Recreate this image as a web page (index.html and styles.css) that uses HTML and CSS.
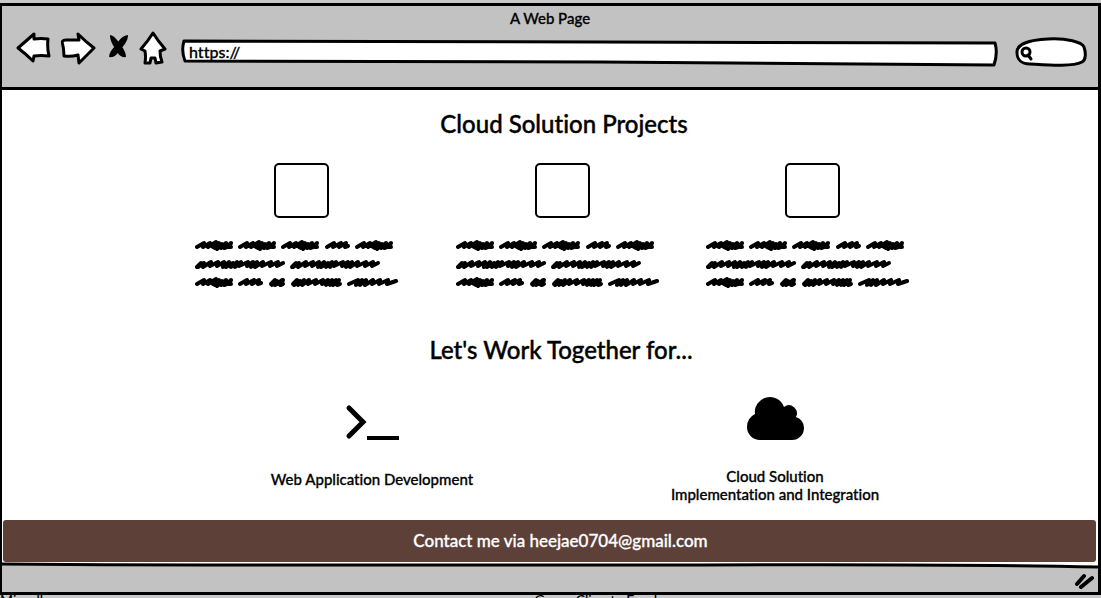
FILE: index.html
```html
<!DOCTYPE html>
<html lang="en">
<head>
<meta charset="utf-8">
<title>A Web Page</title>
<link rel="stylesheet" href="styles.css">
</head>
<body>
<svg class="defs" aria-hidden="true">
  <symbol id="w38" viewBox="0 0 38 12" overflow="visible"><path d="M2 8L9 4L8 8L15 4L13 8L21 3L18 8L20 9L24 4L22 10L27 5L26 9L31 4L29 9L32 8L36 4L34 8L36 8"/></symbol>
  <symbol id="w25" viewBox="0 0 25 12" overflow="visible"><path d="M2 8L9 4L8 8L16 4L14 8L21 4L20 8L23 7"/></symbol>
  <symbol id="w16" viewBox="0 0 16 12" overflow="visible"><path d="M2 8L6 4L3 9L8 5L6 9L8 8L13 4L11 9L14 4L12 9L14 8"/></symbol>
  <symbol id="w51" viewBox="0 0 51 12" overflow="visible"><path d="M2 8L6 4L3 9L9 5L7 9L13 4L11 9L18 4L17 8L25 4L24 8L32 4L31 8L37 4L35 9L41 4L39 9L45 4L42 9L48 4L46 9L49 8"/></symbol>
  <symbol id="w50" viewBox="0 0 51 12" overflow="visible"><path d="M2 8L11 4L9 9L15 4L13 9L19 4L18 9L26 4L25 8L33 4L32 8L41 4L40 8L49 5"/></symbol>
  <symbol id="w90" viewBox="0 0 90 12" overflow="visible"><path d="M2 9L6 5L3 9L9 5L8 9L16 4L15 8L23 4L22 8L29 4L28 9L34 4L31 9L38 5L36 9L42 4L40 9L46 4L44 8L53 4L52 8L58 4L56 9L62 4L60 9L68 4L67 8L76 4L75 8L83 4L82 8L88 5"/></symbol>
  <symbol id="copy" viewBox="0 0 203 50">
    <use href="#w38" x="0" y="0" width="38" height="12"/><use href="#w38" x="43" y="0" width="38" height="12"/><use href="#w38" x="86" y="0" width="38" height="12"/><use href="#w25" x="130" y="0" width="25" height="12"/><use href="#w38" x="160" y="0" width="38" height="12"/>
    <use href="#w90" x="0" y="19" width="90" height="12"/><use href="#w90" x="95" y="19" width="90" height="12"/>
    <use href="#w38" x="0" y="37" width="38" height="12"/><use href="#w25" x="43" y="37" width="25" height="12"/><use href="#w16" x="74" y="37" width="16" height="12"/><use href="#w51" x="96" y="37" width="51" height="12"/><use href="#w50" x="152" y="37" width="51" height="12"/>
  </symbol>
</svg>
<div class="page">
  <div class="window">
    <header class="chrome">
      <div class="window-title">A Web Page</div>
      <div class="toolbar">
        <button class="tool" type="button" aria-label="Back"><svg width="35" height="36" viewBox="16 28 35 36"><path class="sketch" d="M18 46L34 32L34 37Q41 36 48 37Q47 46 49 54Q41 53 34 54L33 59Q26 52 18 46Z"/></svg></button>
        <button class="tool" type="button" aria-label="Forward"><svg width="35" height="36" viewBox="61 28 35 36"><path class="sketch" d="M62 40Q63 38 66 38L79 38L78 32Q86 40 94 46L79 61L78 53Q71 55 64 54Q64 46 62 40Z"/></svg></button>
        <button class="tool" type="button" aria-label="Stop"><svg width="23" height="36" viewBox="107 28 23 36"><path d="M111 33C116 34 118 38 121 42C124 46 127 50 127 55C122 56 119 52 117 48C114 43 111 39 111 33Z"/><path d="M129 33C129 39 125 43 122 47C118 52 116 56 110 55C110 51 113 47 117 43C120 38 123 34 129 33Z"/></svg></button>
        <button class="tool" type="button" aria-label="Home"><svg width="32" height="36" viewBox="139 28 32 36"><path class="sketch" d="M153 31Q158 39 165 47L160 49Q160 55 162 60L156 61L155 56L151 56L150 61L145 61Q146 55 145 49L141 47Q148 39 153 31Z"/></svg></button>
        <div class="address">
          <svg class="outline" viewBox="0 0 817 28" preserveAspectRatio="none" aria-hidden="true"><path class="sketch" d="M3 2Q200 2 420 3Q620 4 815 4Q818 14 814 26Q600 24 420 23L4 22Q0 12 3 2Z"/></svg>
          <input class="address-input" type="text" value="https://" aria-label="Address">
        </div>
        <div class="search">
          <svg class="outline" viewBox="0 0 74 32" preserveAspectRatio="none" aria-hidden="true"><path class="sketch" d="M4 16C3 7 16 3 35 2C54 1 69 5 71 10C73 16 73 23 69 25C59 30 35 28 17 27C8 27 4 22 4 16Z"/><circle class="lens" cx="13" cy="15" r="4"/><path class="lens" d="M15 18L18 22"/></svg>
          <input class="search-input" type="search" aria-label="Search">
        </div>
      </div>
    </header>

    <main class="content">
      <section>
        <h1 class="heading">Cloud Solution Projects</h1>
        <div class="projects">
          <article class="project"><div class="thumb"></div><svg class="copy" width="203" height="50" role="img" aria-label="Project description"><use href="#copy"/></svg></article>
          <article class="project"><div class="thumb"></div><svg class="copy" width="203" height="50" role="img" aria-label="Project description"><use href="#copy"/></svg></article>
          <article class="project"><div class="thumb"></div><svg class="copy" width="203" height="50" role="img" aria-label="Project description"><use href="#copy"/></svg></article>
        </div>
      </section>
      <section>
        <h2 class="heading heading-work">Let's Work Together for...</h2>
        <div class="services">
          <div class="service">
            <svg class="service-icon" width="60" height="50" viewBox="342 395 60 50" aria-hidden="true"><path class="prompt" d="M349 409L363 423L349 437"/><path class="prompt cursor" d="M367 439H399"/></svg>
            <p class="label label-single">Web Application Development</p>
          </div>
          <div class="service">
            <svg class="service-icon" width="60" height="50" viewBox="745 394 60 50" aria-hidden="true"><path d="M760 440A13 13 0 0 1 747 427Q747 418 755 414A15 15 0 0 1 784 407A8 8 0 0 1 796 417Q804 420 804 428A12 12 0 0 1 792 440Z"/></svg>
            <p class="label">Cloud Solution<br>Implementation and Integration</p>
          </div>
        </div>
      </section>
    </main>

    <footer class="contact">Contact me via heejae0704@gmail.com</footer>
    <div class="status">
      <svg class="status-line" viewBox="0 0 1095 10" preserveAspectRatio="none" aria-hidden="true"><path class="paper" d="M0 0H1095V5Q950 2 800 2L200 3L0 1Z"/><path class="rule" d="M0 2Q100 3 200 3H700Q950 2 1095 5"/></svg>
      <svg class="grip" width="20" height="18" viewBox="0 0 20 18" aria-hidden="true"><path d="M2 12L9 4M6 15L17 6"/></svg>
    </div>
  </div>
  <div class="behind" aria-hidden="true"><span>Miscellaneous</span><span>Green Climate Fund</span></div>
</div>
</body>
</html>
```
FILE: styles.css
```css
* { box-sizing: border-box; }
body {
  margin: 0;
  background: #c2c2c2;
  color: #000;
  font-family: Lato, "Liberation Sans", sans-serif;
  font-weight: 500;
  font-variant-ligatures: none;
}
.defs { position: absolute; width: 0; height: 0; }
.page {
  display: flex;
  flex-direction: column;
  min-height: 100vh;
  padding-top: 3px;
  background: #c9c9cb;
}
.window {
  flex: 1;
  display: flex;
  flex-direction: column;
  border: 3px solid #000;
  border-left-width: 2px;
  background: #fff;
}
.chrome {
  height: 84px;
  background: #c2c2c2;
  border-bottom: 3px solid #000;
}
.window-title {
  padding-top: 3px;
  font-size: 15px;
  line-height: 18px;
  text-align: center;
  -webkit-text-stroke: 0.3px #000;
}
.toolbar {
  display: flex;
  align-items: center;
  gap: 10px;
  padding: 0 11px 0 14px;
}
.tool { display: flex; padding: 0; border: 0; background: none; }
.sketch { fill: #fff; stroke: #000; stroke-width: 3; stroke-linejoin: round; }
.address { position: relative; flex: 1; height: 28px; margin-top: 10px; }
.outline { position: absolute; inset: 0; width: 100%; height: 100%; overflow: visible; }
.address-input, .search-input {
  position: relative;
  width: 100%;
  height: 24px;
  padding: 0 8px;
  border: 0;
  outline: 0;
  background: transparent;
  font: inherit;
  font-size: 16px;
  -webkit-text-stroke: 0.3px #000;
}
.search { position: relative; width: 74px; height: 32px; margin: 10px 0 0 6px; }
.search-input { padding-left: 24px; appearance: none; }
.lens { fill: none; stroke: #000; stroke-width: 3; stroke-linecap: round; }
.content { flex: 1; }
.heading {
  margin: 0;
  padding: 18px 0 0 28px;
  font-size: 24px;
  line-height: 32px;
  font-weight: 500;
  text-align: center;
  -webkit-text-stroke: 0.4px #000;
}
.heading-work { padding: 45px 0 0 22px; }
.projects {
  display: flex;
  justify-content: center;
  gap: 37px;
  padding: 23px 0 0 13px;
}
.project { width: 213px; }
.project:first-child { margin-right: 11px; }
.thumb {
  width: 55px;
  height: 55px;
  margin: 0 auto;
  border: 2px solid #000;
  border-radius: 5px;
}
.copy {
  display: block;
  margin-top: 21px;
  fill: none;
  stroke: #000;
  stroke-width: 4;
  stroke-linecap: round;
  stroke-linejoin: round;
}
.services {
  display: grid;
  grid-template-columns: repeat(2, 403px);
  justify-content: center;
  padding: 28px 0 0 47px;
}
.service { text-align: center; }
.service-icon { display: block; margin: 0 auto; }
.prompt { fill: none; stroke: #000; stroke-width: 5; stroke-linecap: round; stroke-linejoin: miter; }
.cursor { stroke-width: 4; stroke-linecap: butt; }
.label {
  margin: 0;
  padding-top: 23px;
  font-size: 15px;
  line-height: 18px;
  -webkit-text-stroke: 0.3px #000;
}
.label-single { padding-top: 26px; }
.contact {
  margin: 0 2px 0 1px;
  border-radius: 3px;
  background: #5d4037;
  color: #fff;
  font-size: 17px;
  line-height: 42px;
  text-align: center;
  padding-left: 22px;
  -webkit-text-stroke: 0.3px #fff;
}
.status {
  display: flex;
  justify-content: flex-end;
  align-items: flex-end;
  position: relative;
  height: 30px;
  padding: 0 3px 2px 0;
  background: #c2c2c2;
}
.status-line { position: absolute; top: 0; left: 0; width: 100%; height: 10px; }
.paper { fill: #fff; }
.rule { fill: none; stroke: #000; stroke-width: 3; }
.grip { fill: none; stroke: #000; stroke-width: 4; stroke-linecap: round; }
.behind {
  display: grid;
  grid-template-columns: 1fr 1fr;
  height: 3px;
  overflow: hidden;
  font-size: 14px;
  line-height: 9px;
}
.behind span:last-child { margin-left: -16px; }
```
